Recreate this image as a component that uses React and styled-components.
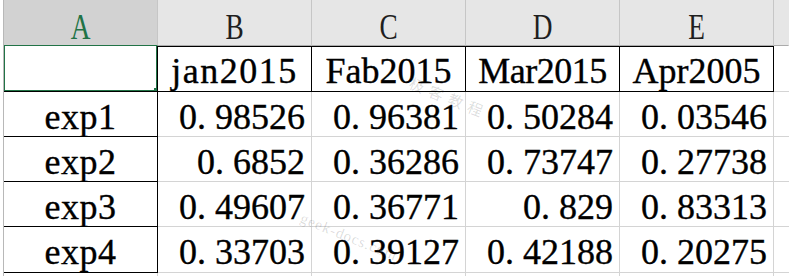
import React from "react";
import styled, { createGlobalStyle } from "styled-components";

const GlobalStyle = createGlobalStyle`
  html, body {
    margin: 0;
    padding: 0;
    background: #fff;
  }
  body {
    width: 806px;
    height: 276px;
    overflow: hidden;
  }
`;

// sheet colours
const green = "#217346";
const gridLine = "#d4d4d4";

const Sheet = styled.div`
  position: relative;
  margin-left: 3px;
  width: 786px;
  display: grid;
  grid-template-columns: repeat(5, 154px) 15px;
  grid-template-rows: 46px 46px 45px 45px 45px 46px 3px;
  border-left: 1px solid #b8b8b8;
  font-family: "Liberation Serif", "Noto Sans CJK SC", serif;
`;

const ColumnHead = styled.div`
  box-sizing: border-box;
  background: ${(p) => (p.$active ? "#d2d2d2" : "#e6e6e6")};
  border-right: 1px solid ${(p) => (p.$last ? "#e6e6e6" : "#c6c6c6")};
  border-bottom: 1px solid ${(p) => (p.$active ? green : "#ababab")};
  color: ${(p) => (p.$active ? green : "#1f1f1f")};
  text-align: center;
  padding-top: 10px;
  font-size: 35px;
  line-height: 1;
  span {
    display: inline-block;
    transform: scaleX(0.78);
  }
`;

const Cell = styled.div`
  position: relative;
  box-sizing: border-box;
  border-right: 1px solid ${(p) => (p.$edge ? "#000" : gridLine)};
  border-bottom: 1px solid ${(p) => (p.$edge ? "#000" : gridLine)};
  box-shadow: ${(p) => (p.$top ? "inset 0 1px 0 #000" : "none")};
  padding: 7px 6px 0;
  font-size: 36px;
  line-height: 1;
  color: #000;
  -webkit-text-stroke: 0.35px #000;
  letter-spacing: ${(p) => p.$spread || 0}px;
  text-align: ${(p) => p.$align || "left"};
  white-space: nowrap;
  overflow: hidden;
  ${(p) => p.$last && "border-right: none;"}
`;

const Selection = styled.span`
  position: absolute;
  top: -2px;
  left: -1px;
  right: -1px;
  bottom: -1px;
  border: 2px solid ${green};
  pointer-events: none;
`;

const FillHandle = styled.span`
  position: absolute;
  right: -3px;
  bottom: -3px;
  width: 6px;
  height: 6px;
  background: ${green};
  z-index: 2;
`;

const Watermark = styled.span`
  position: absolute;
  left: ${(p) => p.$x}px;
  top: ${(p) => p.$y}px;
  transform: rotate(${(p) => p.$turn}deg);
  transform-origin: left top;
  font-family: ${(p) =>
    p.$cjk ? '"Noto Sans CJK SC", sans-serif' : '"Liberation Serif", serif'};
  font-size: ${(p) => p.$size}px;
  letter-spacing: ${(p) => p.$spacing || 0}px;
  color: rgba(0, 0, 0, 0.14);
  white-space: nowrap;
  pointer-events: none;
`;

const columns = ["A", "B", "C", "D", "E"];
const months = [
  { label: "jan2015", spread: 1.5 },
  { label: "Fab2015", spread: 0 },
  { label: "Mar2015", spread: -0.5 },
  { label: "Apr2005", spread: 0 },
];
const rows = [
  { name: "exp1", values: [0.98526, 0.96381, 0.50284, 0.03546] },
  { name: "exp2", values: [0.6852, 0.36286, 0.73747, 0.27738] },
  { name: "exp3", values: [0.49607, 0.36771, 0.829, 0.83313] },
  { name: "exp4", values: [0.33703, 0.39127, 0.42188, 0.20275] },
];

// the sheet shows a gap after the point
const showNumber = (n) => String(n).replace(".", ". ");

export default function App() {
  return (
    <>
      <GlobalStyle />
      <Sheet>
        {columns.map((letter, i) => (
          <ColumnHead key={letter} $active={i === 0}>
            <span>{letter}</span>
          </ColumnHead>
        ))}
        <ColumnHead $last />

        <Cell $edge>
          <Selection />
          <FillHandle />
        </Cell>
        {months.map((m) => (
          <Cell key={m.label} $edge $top $align="center" $spread={m.spread}>
            {m.label}
          </Cell>
        ))}
        <Cell $last />

        {rows.map((row) => (
          <React.Fragment key={row.name}>
            <Cell $edge $align="center" $spread={0.5}>
              {row.name}
            </Cell>
            {row.values.map((v, i) => (
              <Cell key={i} $align="right">
                {showNumber(v)}
              </Cell>
            ))}
            <Cell $last />
          </React.Fragment>
        ))}

        {columns.map((c) => (
          <Cell key={c} />
        ))}
        <Cell $last />

        <Watermark $x={410} $y={72} $turn={22} $size={15} $spacing={6} $cjk>
          极客教程
        </Watermark>
        <Watermark $x={300} $y={210} $turn={22} $size={15} $spacing={1}>
          geek-docs.com
        </Watermark>
      </Sheet>
    </>
  );
}
